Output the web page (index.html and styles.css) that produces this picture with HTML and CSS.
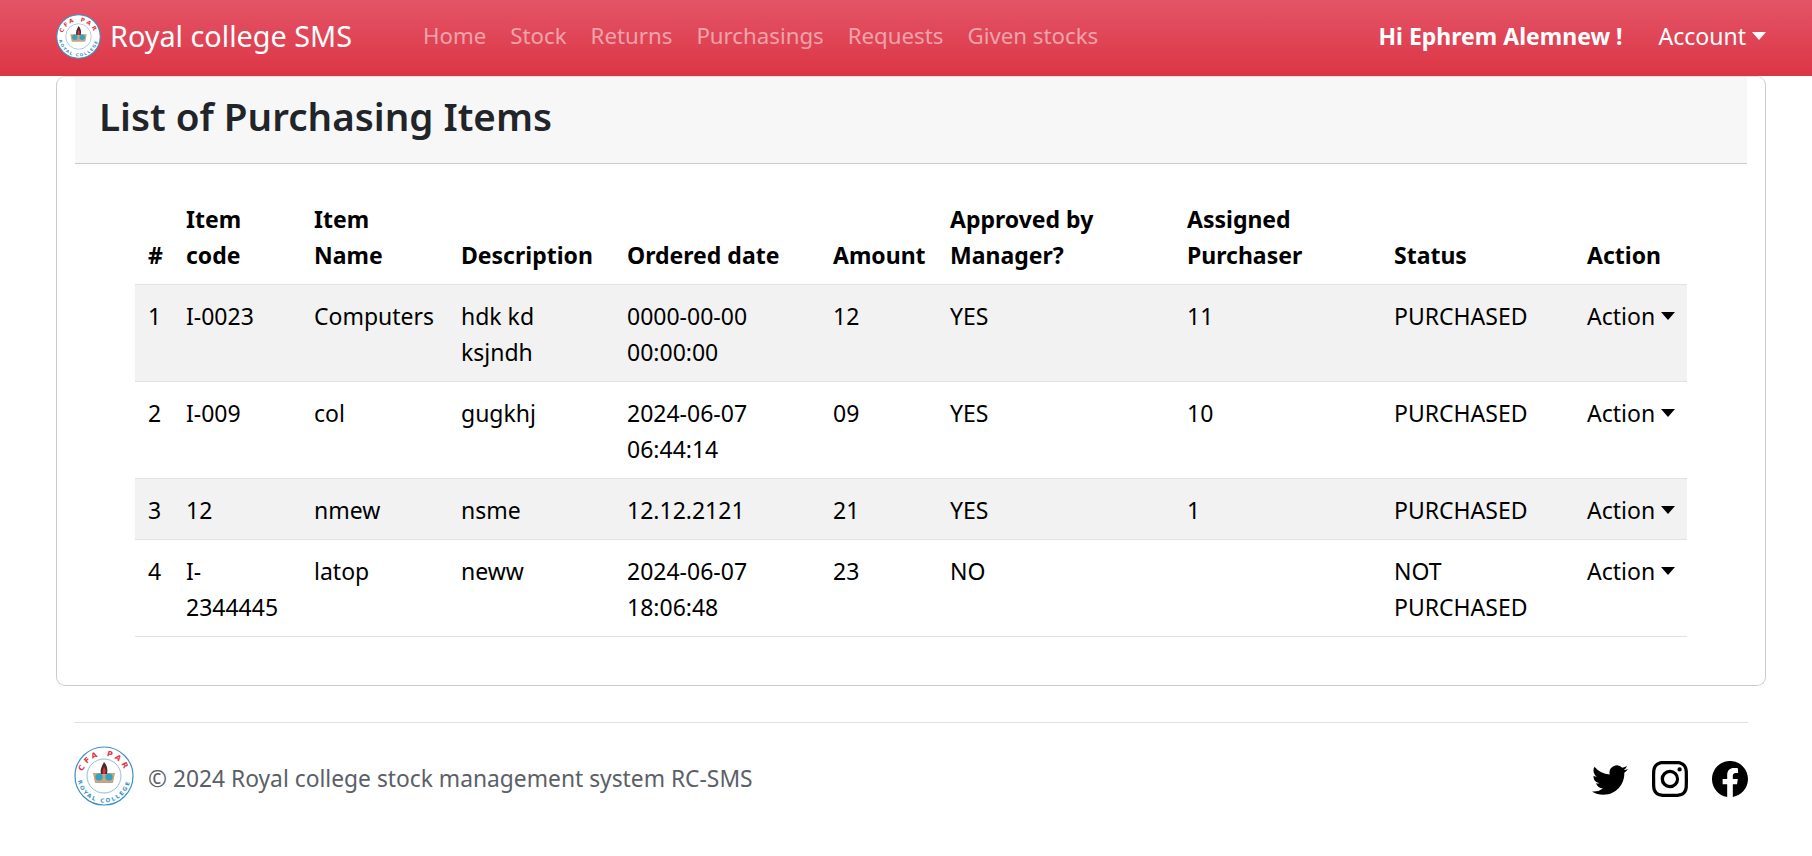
FILE: index.html
```html
<!doctype html>
<html lang="en">
<head>
  <title>Royal college SMS</title>
  <meta charset="utf-8">
  <link rel="stylesheet" href="styles.css">
</head>
<body>
  <nav class="navbar">
    <a class="brand" href="#">
      <svg class="brand-logo" viewBox="0 0 60 60">
        <circle cx="30" cy="30" r="29" fill="#fff" stroke="#3b8fc4" stroke-width="1.4"/>
        <circle cx="30" cy="30" r="17" fill="#fff" stroke="#6fb0cf" stroke-width="0.8"/>
        <path id="arcTop1" d="M8 32 A22 22 0 0 1 52 32" fill="none"/>
        <path id="arcBottom1" d="M3.5 30 A26.5 26.5 0 0 0 56.5 30" fill="none"/>
        <text class="logo-top"><textPath href="#arcTop1" startOffset="50%" text-anchor="middle">CFA PAR</textPath></text>
        <text class="logo-bottom"><textPath href="#arcBottom1" startOffset="50%" text-anchor="middle">ROYAL COLLEGE</textPath></text>
        <path d="M19 27 L41 27 L39 37 L21 37 Z" fill="#c8a57e"/>
        <path d="M30 16 C33 19 34 23 33 28 L27 28 C26 23 28 20 30 16 Z" fill="#4a2a2a"/>
        <path d="M30 21 C32 23 32 26 31 28 L29 28 C28 26 29 23 30 21 Z" fill="#d6344a"/>
        <circle cx="25" cy="31" r="3.6" fill="#2fa3c4"/>
        <circle cx="35" cy="31" r="3.6" fill="#2fa3c4"/>
      </svg>
      <span>Royal college SMS</span>
    </a>
    <ul class="nav-links">
      <li><a href="#">Home</a></li>
      <li><a href="#">Stock</a></li>
      <li><a href="#">Returns</a></li>
      <li><a href="#">Purchasings</a></li>
      <li><a href="#">Requests</a></li>
      <li><a href="#">Given stocks</a></li>
    </ul>
    <span class="greeting">Hi Ephrem Alemnew !</span>
    <a class="account" href="#">Account<i class="caret"></i></a>
  </nav>

  <section class="card">
    <h3 class="card-header">List of Purchasing Items</h3>
    <div class="card-body">
      <table class="items">
        <colgroup>
          <col class="c-num"><col class="c-code"><col class="c-name"><col class="c-desc"><col class="c-date">
          <col class="c-amount"><col class="c-approved"><col class="c-assigned"><col class="c-status"><col class="c-action">
        </colgroup>
        <thead>
          <tr>
            <th>#</th><th>Item code</th><th>Item Name</th><th>Description</th><th>Ordered date</th>
            <th>Amount</th><th>Approved by Manager?</th><th>Assigned Purchaser</th><th>Status</th><th>Action</th>
          </tr>
        </thead>
        <tbody>
          <tr>
            <td>1</td><td>I-0023</td><td>Computers</td><td>hdk kd ksjndh</td><td>0000-00-00 00:00:00</td>
            <td>12</td><td>YES</td><td>11</td><td>PURCHASED</td><td>Action<i class="caret"></i></td>
          </tr>
          <tr>
            <td>2</td><td>I-009</td><td>col</td><td>gugkhj</td><td>2024-06-07 06:44:14</td>
            <td>09</td><td>YES</td><td>10</td><td>PURCHASED</td><td>Action<i class="caret"></i></td>
          </tr>
          <tr>
            <td>3</td><td>12</td><td>nmew</td><td>nsme</td><td>12.12.2121</td>
            <td>21</td><td>YES</td><td>1</td><td>PURCHASED</td><td>Action<i class="caret"></i></td>
          </tr>
          <tr>
            <td>4</td><td>I-2344445</td><td>latop</td><td>neww</td><td>2024-06-07 18:06:48</td>
            <td>23</td><td>NO</td><td></td><td>NOT PURCHASED</td><td>Action<i class="caret"></i></td>
          </tr>
        </tbody>
      </table>
    </div>
  </section>

  <footer class="footer">
    <div class="footer-left">
      <svg class="footer-logo" viewBox="0 0 60 60">
        <circle cx="30" cy="30" r="29" fill="#fff" stroke="#3b8fc4" stroke-width="1.2"/>
        <circle cx="30" cy="30" r="17" fill="#fff" stroke="#6fb0cf" stroke-width="0.8"/>
        <path id="arcTop2" d="M8 32 A22 22 0 0 1 52 32" fill="none"/>
        <path id="arcBottom2" d="M3.5 30 A26.5 26.5 0 0 0 56.5 30" fill="none"/>
        <text class="logo-top"><textPath href="#arcTop2" startOffset="50%" text-anchor="middle">CFA PAR</textPath></text>
        <text class="logo-bottom"><textPath href="#arcBottom2" startOffset="50%" text-anchor="middle">ROYAL COLLEGE</textPath></text>
        <path d="M19 27 L41 27 L39 37 L21 37 Z" fill="#c8a57e"/>
        <path d="M30 16 C33 19 34 23 33 28 L27 28 C26 23 28 20 30 16 Z" fill="#4a2a2a"/>
        <path d="M30 21 C32 23 32 26 31 28 L29 28 C28 26 29 23 30 21 Z" fill="#d6344a"/>
        <circle cx="25" cy="31" r="3.6" fill="#2fa3c4"/>
        <circle cx="35" cy="31" r="3.6" fill="#2fa3c4"/>
      </svg>
      <span class="copy">&copy; 2024 Royal college stock management system RC-SMS</span>
    </div>
    <div class="social">
      <svg viewBox="0 0 16 16"><path d="M5.026 15c6.038 0 9.341-5.003 9.341-9.334 0-.14 0-.282-.006-.422A6.685 6.685 0 0 0 16 3.542a6.658 6.658 0 0 1-1.889.518 3.301 3.301 0 0 0 1.447-1.817 6.533 6.533 0 0 1-2.087.793A3.286 3.286 0 0 0 7.875 6.03a9.325 9.325 0 0 1-6.767-3.429 3.289 3.289 0 0 0 1.018 4.382A3.323 3.323 0 0 1 .64 6.575v.045a3.288 3.288 0 0 0 2.632 3.218 3.203 3.203 0 0 1-.865.115 3.23 3.23 0 0 1-.614-.057 3.283 3.283 0 0 0 3.067 2.277A6.588 6.588 0 0 1 .78 13.58a6.32 6.32 0 0 1-.78-.045A9.344 9.344 0 0 0 5.026 15z"/></svg>
      <svg viewBox="0 0 16 16"><path d="M8 0C5.829 0 5.556.01 4.703.048 3.85.088 3.269.222 2.76.42a3.917 3.917 0 0 0-1.417.923A3.927 3.927 0 0 0 .42 2.76C.222 3.268.087 3.85.048 4.7.01 5.555 0 5.827 0 8.001c0 2.172.01 2.444.048 3.297.04.852.174 1.433.372 1.942.205.526.478.972.923 1.417.444.445.89.719 1.416.923.51.198 1.09.333 1.942.372C5.555 15.99 5.827 16 8 16s2.444-.01 3.298-.048c.851-.04 1.434-.174 1.943-.372a3.916 3.916 0 0 0 1.416-.923c.445-.445.718-.891.923-1.417.197-.509.332-1.09.372-1.942C15.99 10.445 16 10.173 16 8s-.01-2.445-.048-3.299c-.04-.851-.175-1.433-.372-1.941a3.926 3.926 0 0 0-.923-1.417A3.911 3.911 0 0 0 13.24.42c-.51-.198-1.092-.333-1.943-.372C10.443.01 10.172 0 7.998 0h.003zm-.717 1.442h.718c2.136 0 2.389.007 3.232.046.78.035 1.204.166 1.486.275.373.145.64.319.92.599.28.28.453.546.598.92.11.281.24.705.275 1.485.039.843.047 1.096.047 3.231s-.008 2.389-.047 3.232c-.035.78-.166 1.203-.275 1.485a2.47 2.47 0 0 1-.599.919c-.28.28-.546.453-.92.598-.28.11-.704.24-1.485.276-.843.038-1.096.047-3.232.047s-2.39-.009-3.233-.047c-.78-.036-1.203-.166-1.485-.276a2.478 2.478 0 0 1-.92-.598 2.48 2.48 0 0 1-.6-.92c-.109-.281-.24-.705-.275-1.485-.038-.843-.046-1.096-.046-3.233 0-2.136.008-2.388.046-3.231.036-.78.166-1.204.276-1.486.145-.373.319-.64.599-.92.28-.28.546-.453.92-.598.282-.11.705-.24 1.485-.276.738-.034 1.024-.044 2.515-.045v.002zm4.988 1.328a.96.96 0 1 0 0 1.92.96.96 0 0 0 0-1.92zm-4.27 1.122a4.109 4.109 0 1 0 0 8.217 4.109 4.109 0 0 0 0-8.217zm0 1.441a2.667 2.667 0 1 1 0 5.334 2.667 2.667 0 0 1 0-5.334z"/></svg>
      <svg viewBox="0 0 16 16"><path d="M16 8.049c0-4.446-3.582-8.05-8-8.05C3.58 0-.002 3.603-.002 8.05c0 4.017 2.926 7.347 6.75 7.951v-5.625h-2.03V8.05H6.75V6.275c0-2.017 1.195-3.131 3.022-3.131.876 0 1.791.157 1.791.157v1.98h-1.009c-.993 0-1.303.621-1.303 1.258v1.51h2.218l-.354 2.326H9.25V16c3.824-.604 6.75-3.934 6.75-7.951z"/></svg>
    </div>
  </footer>
</body>
</html>
```
FILE: styles.css
```css
* {
  box-sizing: border-box;
}
body {
  margin: 0;
  font: 23px/36px "Noto Sans", sans-serif;
  color: #000;
  background: #fff;
}
a {
  color: inherit;
  text-decoration: none;
}

/* navbar */
.navbar {
  display: flex;
  align-items: center;
  height: 76px;
  padding: 0 46px 4px 56px;
  background: linear-gradient(180deg, #e35567, #dc3545);
  color: #fff;
}
.brand {
  display: flex;
  align-items: center;
  gap: 9px;
  font-size: 28.8px;
  width: 367px;
}
.brand-logo {
  width: 45px;
  height: 45px;
}
.logo-top {
  font: bold 7.5px "DejaVu Sans", sans-serif;
  fill: #e2323f;
  letter-spacing: 3px;
}
.logo-bottom {
  font: bold 5.5px "DejaVu Sans", sans-serif;
  fill: #3b8fc4;
  letter-spacing: 1.8px;
}
.nav-links {
  display: flex;
  gap: 24px;
  flex: 1;
  margin: 0;
  padding: 0;
  list-style: none;
  font-size: 22.25px;
}
.nav-links a {
  color: rgba(255, 255, 255, .5);
}
.greeting {
  font-weight: 700;
  margin-right: 36px;
}
.caret {
  display: inline-block;
  margin-left: 6px;
  vertical-align: 5px;
  border-top: 8px solid;
  border-left: 7.5px solid transparent;
  border-right: 7.5px solid transparent;
}

/* card */
.card {
  margin: 0 46px 0 56px;
  padding: 0 18px 48px;
  border: 1px solid #ccc;
  border-top-color: #ddd;
  border-radius: 9px;
}
.card-header {
  margin: 0;
  height: 87px;
  padding: 0 24px;
  font-size: 38.6px;
  font-weight: 600;
  line-height: 78px;
  color: #212529;
  background: #f7f7f7;
  border-bottom: 1px solid #ccc;
}
.card-body {
  padding: 24px 60px 0;
}
.items {
  width: 1552px;
  table-layout: fixed;
  border-collapse: collapse;
}
.c-num { width: 38px; }
.c-code { width: 128px; }
.c-name { width: 147px; }
.c-desc { width: 166px; }
.c-date { width: 206px; }
.c-amount { width: 117px; }
.c-approved { width: 237px; }
.c-assigned { width: 207px; }
.c-status { width: 193px; }
.c-action { width: 113px; }
.items th,
.items td {
  padding: 13px 11px 11px 13px;
  vertical-align: top;
  text-align: left;
  border-bottom: 1px solid #dee2e6;
}
.items th {
  vertical-align: bottom;
}
.items tbody tr:nth-child(odd) {
  background: #f2f2f2;
}

/* footer */
.footer {
  display: flex;
  align-items: center;
  justify-content: space-between;
  margin: 36px 64px 0 74px;
  padding-top: 23px;
  border-top: 1px solid #dee2e6;
  color: #5a6066;
}
.footer-left {
  display: flex;
  align-items: center;
  gap: 14px;
  font-size: 22.8px;
}
.copy {
  margin-top: 6px;
}
.footer-logo {
  width: 60px;
  height: 60px;
}
.social {
  display: flex;
  gap: 24px;
  margin-top: 6px;
}
.social svg {
  display: block;
  width: 36px;
  height: 36px;
  fill: #000;
}
```
